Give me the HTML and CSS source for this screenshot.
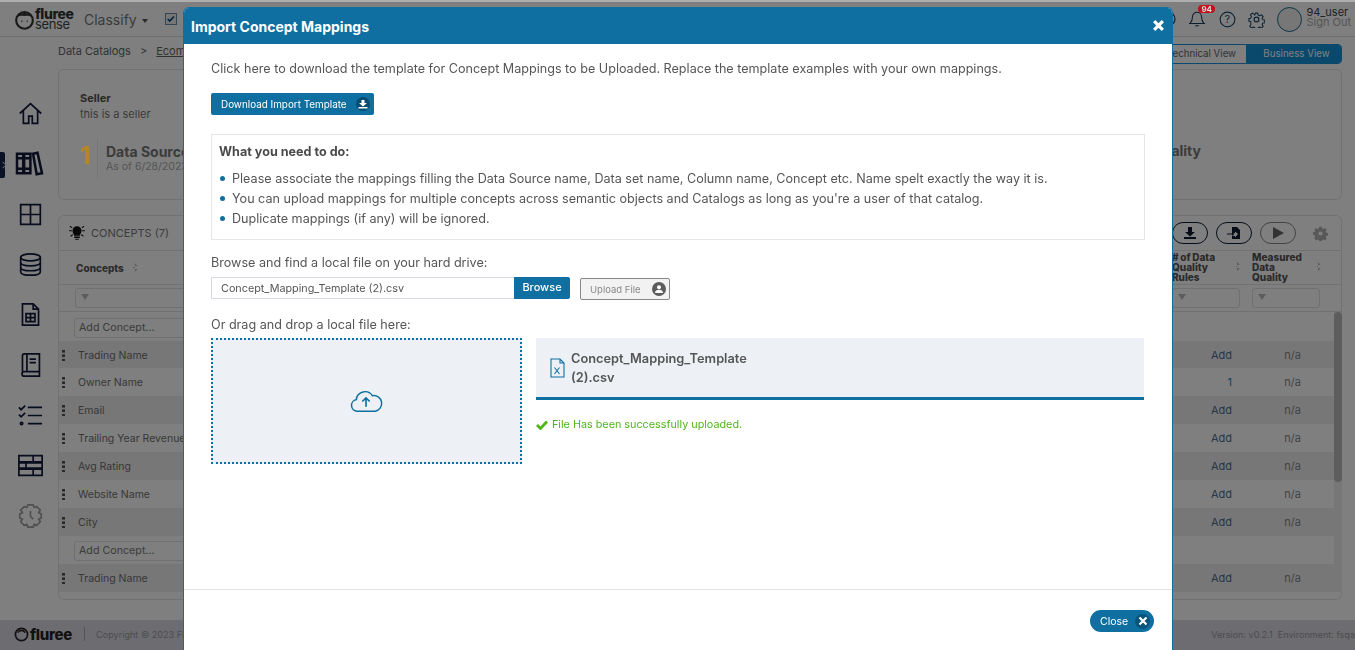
FILE: index.html
```html
<!DOCTYPE html>
<html lang="en">
<head>
<meta charset="utf-8">
<title>Import Concept Mappings</title>
<link rel="stylesheet" href="styles.css">
</head>
<body>
<div class="app">
  <header class="topbar">
    <div class="brand">
      <svg class="brand-mark" viewBox="0 0 24 24" width="21" height="21"><circle cx="12" cy="13" r="9.5" fill="none" stroke="#333" stroke-width="2.4"/><path d="M4 9c3-6 13-6 16 0-4-2-6-1-8-1s-4-1-8 1z" fill="#333"/><path d="M9 13v2M15 13v2" stroke="#333" stroke-width="1"/></svg>
      <div class="brand-text"><span class="brand-a">fluree</span><span class="brand-b">sense</span></div>
    </div>
    <div class="app-menu">Classify <span class="caret"></span></div>
    <span class="checkbox"><svg viewBox="0 0 12 12" width="10" height="10"><path d="M2 6l2.500 2.500 5-5.500" fill="none" stroke="#0e4a70" stroke-width="2"/></svg></span>
    <div class="top-right">
      <svg class="globe" viewBox="0 0 16 16" width="16" height="16"><circle cx="8" cy="8" r="7" fill="none" stroke="#1c3a5c" stroke-width="1.2"/></svg>
      <div class="bell">
        <svg viewBox="0 0 20 20" width="18" height="20"><path d="M10 2.500a5 5 0 0 0-5 5c0 5-2 6.500-3 7.500h16c-1-1-3-2.500-3-7.500a5 5 0 0 0-5-5zM8 17.500h4" fill="none" stroke="#1c3a5c" stroke-width="1.200"/></svg>
        <span class="badge">94</span>
      </div>
      <svg viewBox="0 0 18 18" width="17" height="17"><circle cx="9" cy="9" r="7.800" fill="none" stroke="#1c4a70" stroke-width="1.200"/><text x="9" y="12.800" class="q-mark">?</text></svg>
      <svg viewBox="0 0 24 24" width="17" height="17" fill="none" stroke="#1c4a70" stroke-width="1.700"><circle cx="12" cy="12" r="3.400"/><path d="M10 2h4l.6 3 2.500 1.100 2.600-1.600 2.800 2.900-1.600 2.500 1.100 2.500 3 .6v4l-3 .6-1.100 2.500 1.600 2.600-2.800 2.800-2.600-1.600-2.500 1.100-.6 3h-4l-.6-3-2.500-1.100-2.600 1.600-2.800-2.800 1.600-2.600L3 15.100l-3-.6v-4l3-.6 1.100-2.500-1.600-2.500 2.800-2.900 2.600 1.600L9.400 5z" transform="translate(1.200 1.200) scale(.9)" stroke-linejoin="round"/></svg>
      <span class="avatar"></span>
      <div class="user"><span class="user-name">94_user</span><span class="user-out">Sign Out</span></div>
    </div>
  </header>

  <div class="shell">
    <nav class="rail">
      <span class="rail-marker"></span>
      <svg class="rail-icon" viewBox="0 0 28 28"><path d="M2 14L14 3l12 11M6 11v14h6v-8h4v8h6V11"/></svg>
      <svg class="rail-icon rail-books" viewBox="0 0 30 28"><path d="M1 3h7v22H1zM9 3h7v22H9zM19 3l5-1 5 23-6 1zM1 8h15M1 20h15"/></svg>
      <svg class="rail-icon" viewBox="0 0 28 28"><path d="M3 3h22v22H3zM14 3v22M3 14h22"/></svg>
      <svg class="rail-icon" viewBox="0 0 28 28"><ellipse cx="14" cy="6" rx="11" ry="4"/><path d="M3 6v16c0 2.500 5 4 11 4s11-1.500 11-4V6M3 11.500c0 2.500 5 4 11 4s11-1.500 11-4M3 17c0 2.500 5 4 11 4s11-1.500 11-4"/></svg>
      <svg class="rail-icon" viewBox="0 0 28 28"><path d="M5 2h12l6 6v18H5zM17 2v6h6M9 13h10v9H9zM9 17.500h10M14 13v9"/></svg>
      <svg class="rail-icon" viewBox="0 0 28 28"><path d="M5 22V4a2 2 0 0 1 2-2h17v20H7a2.500 2.500 0 0 0 0 5h17v-5M10 2v20M13 8h7M13 12h7"/></svg>
      <svg class="rail-icon" viewBox="0 0 28 28"><path d="M1 5l2.500 2.500L8 3M11 5h16M1 13l2.500 2.500L8 11M11 14h16M11 23h16"/><circle cx="4" cy="23" r="1.300"/></svg>
      <svg class="rail-icon" viewBox="0 0 28 28"><path d="M1 3h26v7H1zM1 11h26v6H1zM1 18h26v7H1zM17 3v7M9 11v6M17 18v7"/></svg>
      <svg class="rail-icon rail-icon-dim" viewBox="0 0 28 28"><path d="M11 2h6l1 3 3-1 4 4-2 3 3 1v5l-3 1 2 3-4 4-3-1-1 3h-6l-1-3-3 1-4-4 2-3-3-1v-5l3-1-2-3 4-4 3 1zM14 9v6l3 3" stroke-linejoin="round"/></svg>
    </nav>

    <main class="content">
      <div class="crumbs-row">
        <div class="crumbs"><span>Data Catalogs</span><span class="crumb-sep">&gt;</span><span class="crumb-link">Ecommerce</span></div>
        <div class="view-toggle"><span class="view-off">Technical View</span><span class="view-on">Business View</span></div>
      </div>

      <section class="card summary">
        <div class="summary-title">Seller</div>
        <div class="summary-sub">this is a seller</div>
        <div class="stats">
          <div class="stat">
            <span class="stat-num">1</span>
            <div class="stat-body"><strong class="stat-label">Data Sources</strong><span class="stat-date">As of 6/28/2023</span></div>
          </div>
          <strong class="stat-label stat-end">Data Quality</strong>
        </div>
      </section>

      <section class="card concepts">
        <div class="concepts-head">
          <svg viewBox="2 0 14 16" width="16" height="18" fill="#111"><path d="M5 6a4 4 0 0 1 8 0c0 2-1.500 3-1.500 4.500h-5C6.500 9 5 8 5 6zM6.500 11h5v1.500h-5zM7.500 13h3v1H7.500zM2 5.500h2.500v1H2zM13.500 5.500H16v1h-2.500zM3 1.500l2 1.500-.6.800-2-1.500zM15 1.500L13 3l.6.800 2-1.500zM3 10.500l2-1.500.6.800-2 1.500zM15 10.500L13 9l-.6.800 2 1.500z"/></svg>
          <span class="concepts-title">CONCEPTS (7)</span>
          <div class="concepts-actions">
            <span class="pill"><svg viewBox="0 0 14 14" width="14" height="14" fill="#0d1a33"><path d="M5 1h4v5h3L7 10.500 2 6h3zM1 11h12v2H1z"/></svg></span>
            <span class="pill"><svg viewBox="0 0 14 14" width="14" height="14" fill="#0d1a33"><path d="M5 1h5l3 3v9H5v-3h3v1.500L11 8 8 5.500V7H5zM0 7.500h5V6l2.500 2L5 10V8.500H0z"/></svg></span>
            <span class="pill pill-muted"><svg viewBox="0 0 14 14" width="14" height="14" fill="#666"><path d="M2 1l11 6-11 6z"/></svg></span>
            <svg class="concepts-gear" viewBox="0 0 16 16" width="15" height="15" fill="#b0b0b0"><path d="M6.500 0h3l.4 2 1.600.7 1.700-1.100 2.100 2.100-1.100 1.700.7 1.600 2 .4v3l-2 .4-.7 1.600 1.100 1.700-2.100 2.100-1.700-1.100-1.600.7-.4 2h-3l-.4-2-1.600-.7-1.700 1.100L.5 13.200l1.100-1.700-.7-1.600-2-.4v-3l2-.4.7-1.600L.5 3.700 2.600 1.600l1.700 1.100 1.600-.7zM8 5.500a2.500 2.500 0 1 0 0 5 2.500 2.500 0 0 0 0-5z" transform="translate(.8 .8) scale(.9)"/></svg>
          </div>
        </div>
        <div class="grid-row grid-head">
          <div class="col-name col-head-name"><strong>Concepts</strong><span class="sorter"></span></div>
          <div class="col-head col-head-rules"><strong># of Data Quality Rules</strong><span class="sorter"></span></div>
          <div class="col-head col-head-measured"><strong>Measured Data Quality</strong><span class="sorter"></span></div>
        </div>
        <div class="grid-row grid-filter">
          <div class="col-name"><span class="filter-box filter-wide"><span class="funnel"></span></span></div>
          <div><span class="filter-box"><span class="funnel"></span></span></div>
          <div><span class="filter-box"><span class="funnel"></span></span></div>
        </div>
        <div class="grid-wrap">
          <div class="grid-body">
            <div class="grid-row row row-plain row-first"><div class="col-name"><span class="add-box">Add Concept...</span></div></div>
            <div class="grid-row row row-alt row-trim"><div class="col-name"><span class="dots"></span>Trading Name</div><div class="cell-add">Add</div><div class="cell-na">n/a</div></div>
            <div class="grid-row row"><div class="col-name"><span class="dots"></span>Owner Name</div><div class="cell-add cell-link">1</div><div class="cell-na">n/a</div></div>
            <div class="grid-row row row-alt"><div class="col-name"><span class="dots"></span>Email</div><div class="cell-add">Add</div><div class="cell-na">n/a</div></div>
            <div class="grid-row row"><div class="col-name"><span class="dots"></span>Trailing Year Revenue</div><div class="cell-add">Add</div><div class="cell-na">n/a</div></div>
            <div class="grid-row row row-alt"><div class="col-name"><span class="dots"></span>Avg Rating</div><div class="cell-add">Add</div><div class="cell-na">n/a</div></div>
            <div class="grid-row row"><div class="col-name"><span class="dots"></span>Website Name</div><div class="cell-add">Add</div><div class="cell-na">n/a</div></div>
            <div class="grid-row row row-alt"><div class="col-name"><span class="dots"></span>City</div><div class="cell-add">Add</div><div class="cell-na">n/a</div></div>
            <div class="grid-row row row-plain row-second"><div class="col-name"><span class="add-box">Add Concept...</span></div></div>
            <div class="grid-row row row-alt"><div class="col-name"><span class="dots"></span>Trading Name</div><div class="cell-add">Add</div><div class="cell-na">n/a</div></div>
          </div>
          <div class="scroll-track"><span class="scroll-thumb"></span></div>
        </div>
      </section>
    </main>
  </div>

  <footer class="pagefoot">
    <div class="foot-brand">
      <svg viewBox="0 0 16 16" width="15" height="15"><circle cx="8" cy="8" r="6.500" fill="none" stroke="#222" stroke-width="1.800"/><path d="M4 6c2-3 6-3 8 0" fill="none" stroke="#222" stroke-width="1.500"/></svg>
      <span class="foot-logo">fluree</span>
    </div>
    <span class="foot-sep"></span>
    <span class="foot-copy">Copyright © 2023 Fluree</span>
    <span class="foot-version">Version: v0.2.1&nbsp;&nbsp;Environment: fsqa</span>
  </footer>
</div>

<div class="overlay"></div>

<div class="modal" role="dialog">
  <div class="modal-head">
    <span class="modal-title">Import Concept Mappings</span>
    <svg class="modal-x" viewBox="0 0 12 12" width="13" height="13"><path d="M2 2l8 8M10 2l-8 8" stroke="#fff" stroke-width="3"/></svg>
  </div>
  <div class="modal-body">
    <p class="intro">Click here to download the template for Concept Mappings to be Uploaded. Replace the template examples with your own mappings.</p>
    <button class="btn-download">Download Import Template
      <span class="btn-disc"><svg viewBox="0 0 10 10" width="10" height="10" fill="#fff"><path d="M3.500 1h3v3H9L5 7.500 1 4h2.500zM0.500 8h9v1.500h-9z"/></svg></span>
    </button>
    <div class="todo">
      <h4 class="todo-title">What you need to do:</h4>
      <ul class="todo-list">
        <li>Please associate the mappings filling the Data Source name, Data set name, Column name, Concept etc. Name spelt exactly the way it is.</li>
        <li>You can upload mappings for multiple concepts across semantic objects and Catalogs as long as you're a user of that catalog.</li>
        <li>Duplicate mappings (if any) will be ignored.</li>
      </ul>
    </div>
    <label class="field-label">Browse and find a local file on your hard drive:</label>
    <div class="browse-row">
      <div class="file-input">Concept_Mapping_Template (2).csv</div>
      <button class="btn-browse">Browse</button>
      <button class="btn-upload">Upload File
        <span class="upload-disc"><svg viewBox="0 0 10 10" width="10" height="10" fill="#fff"><circle cx="5" cy="3.300" r="2"/><path d="M1 9c0-2.500 2-3.300 4-3.300S9 6.500 9 9z"/></svg></span>
      </button>
    </div>
    <label class="field-label drag-label">Or drag and drop a local file here:</label>
    <div class="drop-row">
      <div class="dropzone">
        <svg viewBox="0 0 34 24" width="33" height="24" fill="none" stroke="#0e6fa0" stroke-width="1.500"><path d="M9 22.500H7.500a6 6 0 0 1-1-11.900A9 9 0 0 1 23 6.500a8 8 0 0 1 3 16z"/><path d="M16.500 18v-9M12.700 12.500l3.800-3.800 3.800 3.800" stroke-width="1.700"/></svg>
      </div>
      <div class="file-side">
        <div class="file-panel">
          <svg viewBox="0 0 15 20" width="15" height="20" fill="none" stroke="#0e6fa0" stroke-width="1.100"><path d="M1 1h9l4 4v14H1zM10 1v4h4"/><path d="M4.500 9.500l5 6.500M9.500 9.500l-5 6.500"/></svg>
          <div class="file-name">Concept_Mapping_Template (2).csv</div>
        </div>
        <div class="file-ok">
          <svg viewBox="0 0 12 10" width="12" height="10"><path d="M1 5l3.500 3.500L11 1.500" fill="none" stroke="#4fb518" stroke-width="2.800"/></svg>
          File Has been successfully uploaded.
        </div>
      </div>
    </div>
  </div>
  <div class="modal-foot">
    <button class="btn-close">Close
      <span class="close-disc"><svg viewBox="0 0 10 10" width="10" height="10"><path d="M1.500 1.500l7 7M8.500 1.500l-7 7" stroke="#fff" stroke-width="2.200"/></svg></span>
    </button>
  </div>
</div>
</body>
</html>
```
FILE: styles.css
```css
* { box-sizing: border-box; }
html, body { margin: 0; height: 100%; overflow: hidden; }
body { font-family: Inter, "Liberation Sans", sans-serif; font-size: 11px; color: #666; background: #fff; }
button { font-family: inherit; }

.app { height: 650px; display: flex; flex-direction: column; }

.topbar { height: 37px; flex: none; display: flex; align-items: center; padding: 2px 4px 0 14px; border-bottom: 1px solid #ddd; }
.brand { display: flex; align-items: center; width: 70px; gap: 0; }
.brand-mark { flex: none; }
.brand-text { display: flex; flex-direction: column; line-height: 10px; }
.brand-a { font-weight: 800; font-size: 14px; color: #333; letter-spacing: -.4px; }
.brand-b { font-size: 13px; color: #444; letter-spacing: -.4px; }
.app-menu { font-size: 14px; color: #777; width: 81px; }
.caret { display: inline-block; margin-left: 1px; vertical-align: middle; border: 3.500px solid transparent; border-top: 4px solid #555; border-bottom: 0; }
.checkbox { width: 12px; height: 12px; border: 1px solid #6a8aa8; background: #eee; display: flex; }
.top-right { margin-left: auto; display: flex; align-items: center; gap: 12px; }
.globe { margin-right: 0; }
.bell { position: relative; width: 18px; height: 20px; margin-right: 1px; }
.badge { position: absolute; z-index: 20; top: -4px; left: 10px; background: #c4101c; color: #ddd; font-size: 8px; font-weight: 700; line-height: 8px; padding: 0 3px; border-radius: 5px; }
.q-mark { font-size: 11px; text-anchor: middle; fill: #1c4a70; font-family: Inter, sans-serif; }
.avatar { width: 25px; height: 25px; border-radius: 50%; border: 1px solid #1c6a90; background: #eee; margin-left: 0; }
.user { display: flex; flex-direction: column; line-height: 10px; font-size: 11px; margin: -4px 0 0 -8px; }
.user-name { color: #444; }
.user-out { color: #aaa; }

.shell { flex: 1; display: flex; min-height: 0; }
.rail { width: 58px; flex: none; position: relative; display: flex; flex-direction: column; align-items: center; padding: 64px 0 0 2px; gap: 25.250px; }
.rail-marker { position: absolute; left: 0; top: 115px; width: 5px; height: 26px; background: #14264a; border-radius: 0 2px 2px 0; }
.rail-marker::after { content: ""; position: absolute; left: 0; top: 10px; width: 5px; height: 5px; border-top: 1px solid #ddd; border-right: 1px solid #ddd; transform: rotate(45deg) scale(.8); }
.rail-icon { width: 25px; height: 25px; fill: none; stroke: #10183a; stroke-width: 1.900; flex: none; }
.rail-books { width: 29px; stroke-width: 2.800; margin-left: -2px; }
.rail-icon-dim { stroke: #a0a0a0; }

.content { flex: 1; padding: 0 13px 0 0; min-width: 0; display: flex; flex-direction: column; }
.crumbs-row { height: 32px; display: flex; align-items: center; justify-content: space-between; }
.crumbs { display: flex; gap: 9px; color: #666; margin-top: -5px; }
.crumb-link { text-decoration: underline; }
.view-toggle { display: flex; height: 20px; margin-top: 1px; font-size: 9.700px; line-height: 18px; border: 1px solid #1490d8; border-radius: 4px; overflow: hidden; }
.view-off { width: 82px; padding-left: 3px; color: #666; }
.view-on { width: 95px; text-align: center; padding-left: 6px; background: #1490d8; color: #fff; }

.card { border: 1px solid #e4e4e4; border-radius: 6px; background: #fff; }
.summary { height: 131px; padding: 21px 21px; flex: none; }
.summary-title { font-weight: 700; font-size: 11px; line-height: 14px; color: #555; }
.summary-sub { line-height: 16px; margin-top: 1px; color: #777; }
.stats { display: flex; justify-content: space-between; align-items: flex-start; margin-top: 16px; padding-right: 119px; }
.stat { display: flex; align-items: center; height: 40px; overflow: hidden; width: 200px; }
.stat-num { position: relative; z-index: 20; font-size: 24px; font-weight: 800; color: #b5852a; height: 40px; line-height: 36px; border-right: 1px solid #777; margin-right: 8px; flex: none; width: 18px; }
.stat-body { display: flex; flex-direction: column; white-space: nowrap; }
.stat-label { font-size: 14px; color: #777; font-weight: 700; line-height: 17px; }
.stat-date { font-size: 10.500px; color: #aaa; line-height: 13px; }
.stat-end { margin-top: 4px; }

.concepts { margin-top: 15px; height: 385px; flex: none; }
.concepts-head { height: 35px; display: flex; align-items: center; padding: 0 13px 0 10px; border-bottom: 1px solid #e4e4e4; }
.concepts-title { margin-left: 6px; color: #777; font-size: 11px; }
.concepts-actions { margin-left: auto; display: flex; align-items: center; gap: 8px; }
.pill { width: 36px; height: 22px; border: 1px solid #0d1a33; border-radius: 11px; display: flex; align-items: center; justify-content: center; }
.pill-muted { border-color: #888; }
.concepts-gear { margin-left: 9px; }

.grid-row { display: grid; grid-template-columns: 1fr 80px 90px; align-items: center; }
.grid-head { height: 34px; border-bottom: 1px solid #e4e4e4; padding-right: 7px; }
.grid-head strong { font-size: 10px; line-height: 10px; color: #555; font-weight: 800; }
.col-name { padding-left: 3px; display: flex; align-items: center; white-space: nowrap; }
.col-head-name { padding-left: 17px; gap: 8px; }
.col-head { display: flex; align-items: center; justify-content: space-between; padding-left: 8px; margin-top: -2px; }
.col-head strong { width: 56px; display: block; word-spacing: -.5px; }
.col-head-measured strong { word-spacing: 0; }
.col-head-rules { padding-right: 4px; }
.col-head-measured { padding-right: 13px; }
.sorter { width: 6px; height: 9px; flex: none; background: linear-gradient(#b8b8b8, #b8b8b8) center / 3px 1px no-repeat; border-top: 3px solid #b8b8b8; border-bottom: 3px solid #b8b8b8; clip-path: polygon(50% 0, 100% 36%, 0 36%, 0 64%, 100% 64%, 50% 100%); }
.grid-filter { height: 27px; padding: 0 7px 1px 0; border-bottom: 1px solid #e4e4e4; }
.grid-filter > .col-name { padding-left: 16px; }
.filter-box { display: block; height: 20px; width: 68px; border: 1px solid #e0e0e0; border-radius: 3px; padding: 5px 0 0 5px; background: #fff; margin-left: 8px; }
.filter-wide { width: 100%; margin: 0; }
.funnel { display: block; width: 0; height: 0; border: 4.500px solid transparent; border-top: 6px solid #bbb; border-bottom: 0; }
.grid-wrap { display: flex; }
.grid-body { flex: 1; min-width: 0; }
.row { height: 28px; color: #707070; font-size: 10.500px; }
.row-first { height: 29px; padding-top: 2px; }
.row-trim { height: 27px; padding-top: 1px; }
.row-second { padding-top: 2px; }
.row-alt { background: #efefef; }
.row-plain { background: #fff; }
.add-box { display: block; width: 100%; margin-left: 12px; height: 20px; line-height: 18px; border: 1px solid #e0e0e0; border-radius: 3px; padding-left: 4px; color: #777; font-size: 10.700px; }
.dots { width: 3px; height: 12px; margin: 0 13px 0 0; background: radial-gradient(circle at center, #555 1.400px, transparent 1.600px) 0 0 / 3px 4.500px repeat-y; }
.cell-add { text-align: right; padding-right: 12px; color: #4d7090; font-size: 11px; }
.cell-link { color: #1a86c0; }
.cell-na { text-align: center; color: #888; padding-left: 7px; font-size: 11px; }
.scroll-track { width: 8px; background: #eee; flex: none; margin-right: -1px; }
.scroll-thumb { display: block; height: 170px; background: #bbb; border-radius: 4px; }

.pagefoot { height: 30px; flex: none; background: #d9d9e3; display: flex; align-items: center; padding: 0 0 2px 14px; font-size: 9.100px; color: #999; }
.foot-brand { display: flex; align-items: center; gap: 1px; }
.foot-logo { font-size: 15px; font-weight: 800; color: #222; letter-spacing: -.3px; }
.foot-sep { width: 1px; height: 14px; background: #aaa; margin: 0 11px 0 12px; }
.foot-version { margin-left: auto; white-space: nowrap; font-size: 9.050px; }

.overlay { position: fixed; inset: 0; z-index: 10; background: rgba(0,0,0,.5); background-clip: padding-box; border-top: 2px solid rgba(0,0,0,.32); }

.modal { position: fixed; z-index: 30; left: 183px; top: 7px; width: 990px; height: 643px; background: #fff; border: 1px solid #0e6fa0; border-bottom: 0; border-radius: 6px 6px 0 0; display: flex; flex-direction: column; overflow: hidden; }
.modal-head { height: 36px; flex: none; background: #0e6fa0; display: flex; align-items: center; justify-content: space-between; padding: 0 7px 0 7px; }
.modal-x { margin-top: -1px; }
.modal-title { color: #fff; font-size: 14px; font-weight: 700; }
.modal-body { flex: 1; min-height: 0; padding: 15px 27px 0 27px; color: #555; font-size: 12.600px; line-height: 20px; }
.intro { margin: 0; }
.btn-download { margin-top: 14px; display: flex; align-items: center; justify-content: space-between; width: 163px; height: 22px; padding: 0 4px 0 10px; border: 0; border-radius: 2px; background: #0e6fa0; color: #fff; font-size: 9.900px; }
.btn-disc { width: 14px; height: 14px; border-radius: 50%; background: #084c72; display: flex; align-items: center; justify-content: center; }
.todo { margin-top: 19px; height: 106px; border: 1px solid #e6e6e6; padding: 7px 7px; }
.todo-title { margin: 0; font-size: 12.600px; line-height: 20px; font-weight: 700; color: #4a4a4a; }
.todo-list { margin: 7px 0 0; padding: 0; list-style: none; }
.todo-list li { padding-left: 13px; position: relative; }
.todo-list li::before { content: ""; position: absolute; left: 1px; top: 7px; width: 5px; height: 5px; border-radius: 50%; background: #0e6fa0; }
.field-label { display: block; margin-top: 13px; }
.browse-row { display: flex; align-items: flex-start; margin-top: 4px; }
.file-input { width: 303px; height: 22px; border: 1px solid #d5dae3; border-right: 0; padding-left: 9px; font-size: 10.800px; line-height: 21px; color: #555; }
.btn-browse { width: 56px; height: 22px; border: 0; background: #0e6fa0; color: #fff; font-size: 11px; font-weight: 500; border-radius: 0 2px 2px 0; padding: 0 0 2px; }
.btn-upload { margin: 1px 0 0 10px; width: 90px; height: 22px; border: 1px solid #888; border-radius: 2px; background: #f2f2f2; color: #888; font-size: 9.500px; display: flex; align-items: center; justify-content: space-between; padding: 0 3px 0 9px; }
.upload-disc { width: 14px; height: 14px; border-radius: 50%; background: #5c5c5c; display: flex; align-items: center; justify-content: center; }
.drag-label { margin-top: 15px; }
.drop-row { display: flex; gap: 14px; margin-top: 3px; }
.dropzone { width: 311px; height: 126px; flex: none; border: 2px dotted #0e6fa0; background: #edf1f5; display: flex; align-items: center; justify-content: center; }
.file-side { width: 608px; }
.file-panel { height: 62px; background: #edf1f5; border-bottom: 3px solid #0e6fa0; display: flex; align-items: center; gap: 6px; padding-left: 14px; }
.file-name { width: 200px; font-size: 12.800px; line-height: 19px; font-weight: 600; color: #555; }
.file-ok { margin-top: 15px; display: flex; align-items: center; gap: 4px; font-size: 10.800px; color: #4fb518; }
.modal-foot { height: 61px; flex: none; border-top: 1px solid #e3e3e3; display: flex; justify-content: flex-end; align-items: flex-start; padding: 20px 18px 0 0; }
.btn-close { width: 64px; height: 22px; border: 0; border-radius: 11px; background: #0e6fa0; color: #fff; font-size: 10.500px; display: flex; align-items: center; justify-content: space-between; padding: 0 4px 0 10px; }
.close-disc { width: 15px; height: 15px; border-radius: 50%; background: #0a557d; display: flex; align-items: center; justify-content: center; }
```
